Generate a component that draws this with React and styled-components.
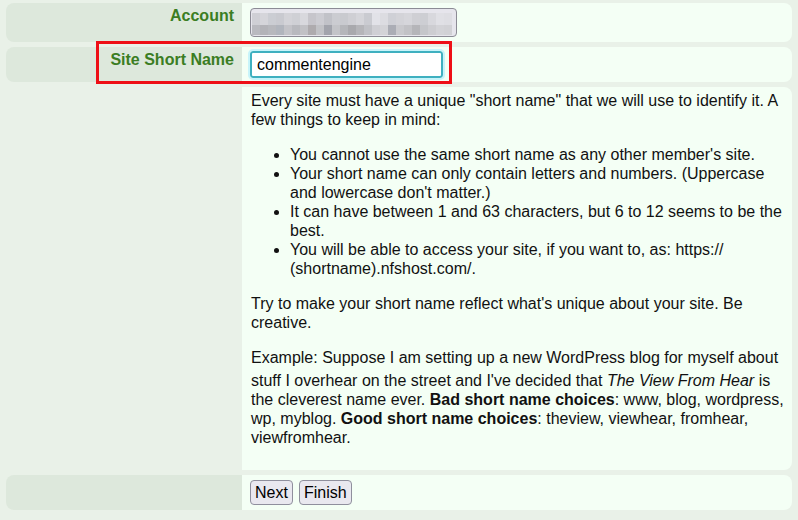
import styled, { createGlobalStyle } from "styled-components";

const GlobalStyle = createGlobalStyle`
    html, body {
        margin: 0;
        padding: 0;
        background: #e9f1e8;
    }
    body {
        font-family: "Liberation Sans", Arial, sans-serif;
        font-size: 16px;
        color: #111;
    }
`

const Form = styled.div`
    display: flex;
    flex-direction: column;
    gap: 5px;
    padding: 3px 6px 0 6px;
    width: 100%;
    box-sizing: border-box;
`
const Row = styled.div`
    position: relative;
    display: grid;
    grid-template-columns: 236px 1fr;
`
const LabelCell = styled.div`
    background: ${(p) => (p.$empty ? "transparent" : "#dde8dc")};
    border-radius: 8px 0 0 8px;
    padding: 4px 8px 0 8px;
    text-align: right;
    font-weight: bold;
    color: #3b7d23;
    line-height: 18px;
`
const ValueCell = styled.div`
    background: #f4fff5;
    border-radius: 0 8px 8px 0;
    padding: ${(p) => p.$pad || "5px"} 0 ${(p) => p.$pad || "5px"} 8px;
`
const Highlight = styled.div`
    position: absolute;
    left: 90px;
    top: -6px;
    width: 356px;
    height: 43px;
    box-sizing: border-box;
    border: 3px solid #ee0f16;
    pointer-events: none;
`
const MaskedField = styled.div`
    width: 207px;
    height: 29px;
    box-sizing: border-box;
    border: 1px solid #8c8b95;
    border-radius: 4px;
    background: #e6e5ec;
    padding: 4px 1px 0 1px;
    display: grid;
    grid-template-columns: repeat(25, 8px);
    grid-template-rows: 12px 10px;
`
const Tile = styled.span`
    background: ${(p) => p.$shade};
`
const TextInput = styled.input`
    width: 193px;
    height: 27px;
    box-sizing: border-box;
    border: 2px solid #3fb0c0;
    border-radius: 3px;
    outline: 2px solid #c8f4fa;
    outline-offset: 0;
    font-family: "Liberation Sans", Arial, sans-serif;
    font-size: 16px;
    color: #000;
    padding: 0 5px;
    background: #fff;
    caret-color: #000;
`
const Help = styled.div`
    padding-left: 1px;
    padding-bottom: 19px;
    line-height: 19px;
`
const Para = styled.p`
    margin: 0 0 16px 0;
    &:last-child {
        margin-bottom: 0;
    }
`
const List = styled.ul`
    margin: 0 0 16px 0;
    padding-left: 39px;
`
const Title = styled.em`
    display: inline-block;
    padding-top: 4px;
`
const ButtonBar = styled.div`
    display: flex;
    gap: 6px;
`
const Button = styled.button`
    font-family: "Liberation Sans", Arial, sans-serif;
    font-size: 16px;
    color: #000;
    background: #e9e8ef;
    border: 1px solid #8f8f9d;
    border-radius: 4px;
    height: 25px;
    padding: 0 4px;
`

const shades = [
    ["#cfcfd5", "#b9b9bf"], ["#d5d5da", "#b3b3b8"], ["#cbcdd3", "#b7b8bd"], ["#c9cad0", "#b1b5bd"],
    ["#d3d3d8", "#c3c3c8"], ["#cfd0d5", "#b8b9be"], ["#d8d8dd", "#c1c1c5"], ["#c6c5cb", "#aeabae"],
    ["#ccccd2", "#c1c2c6"], ["#c1c2c8", "#a2a4ac"], ["#cbccd1", "#c3c4c8"], ["#c9cacf", "#b5b6ba"],
    ["#cfcfd4", "#a9a9ad"], ["#d5d5da", "#b5b5b9"], ["#cacbd1", "#c0c1c6"], ["#e2e2e8", "#cfcfd4"],
    ["#dcdce1", "#d3d3d7"], ["#cfd0d6", "#abadb5"], ["#d3d3d8", "#c9c9cd"], ["#d6d6db", "#c2c2c6"],
    ["#cfcfd4", "#b5b5b9"], ["#cdced3", "#c5c6ca"], ["#d8d8dd", "#cdcdd1"], ["#e0e0e5", "#d3d3d7"],
    ["#dedee3", "#d1d1d5"],
];

const App = () => {
    return (
        <>
            <GlobalStyle />
            <Form>
                <Row>
                    <LabelCell>Account</LabelCell>
                    <ValueCell>
                        <MaskedField>
                            {shades.map((s, i) => <Tile key={"a" + i} $shade={s[0]} />)}
                            {shades.map((s, i) => <Tile key={"b" + i} $shade={s[1]} />)}
                        </MaskedField>
                    </ValueCell>
                </Row>
                <Row>
                    <LabelCell>Site Short Name</LabelCell>
                    <ValueCell $pad="4px">
                        <TextInput defaultValue="commentengine" autoFocus />
                    </ValueCell>
                    <Highlight />
                </Row>
                <Row>
                    <LabelCell $empty />
                    <ValueCell $pad="4px">
                        <Help>
                            <Para>
                                Every site must have a unique "short name" that we will use to identify it. A few things to keep in mind:
                            </Para>
                            <List>
                                <li>You cannot use the same short name as any other member's site.</li>
                                <li>Your short name can only contain letters and numbers. (Uppercase and lowercase don't matter.)</li>
                                <li>It can have between 1 and 63 characters, but 6 to 12 seems to be the best.</li>
                                <li>You will be able to access your site, if you want to, as: https://<wbr />(shortname).nfshost.com/.</li>
                            </List>
                            <Para>
                                Try to make your short name reflect what's unique about your site. Be creative.
                            </Para>
                            <Para>
                                Example: Suppose I am setting up a new WordPress blog for myself about stuff I overhear on the street and I've decided that <Title>The View From Hear</Title> is the cleverest name ever. <b>Bad short name choices</b>: www, blog, wordpress, wp, myblog. <b>Good short name choices</b>: theview, viewhear, fromhear, viewfromhear.
                            </Para>
                        </Help>
                    </ValueCell>
                </Row>
                <Row>
                    <LabelCell />
                    <ValueCell>
                        <ButtonBar>
                            <Button>Next</Button>
                            <Button>Finish</Button>
                        </ButtonBar>
                    </ValueCell>
                </Row>
            </Form>
        </>
    );
};

export default App;
